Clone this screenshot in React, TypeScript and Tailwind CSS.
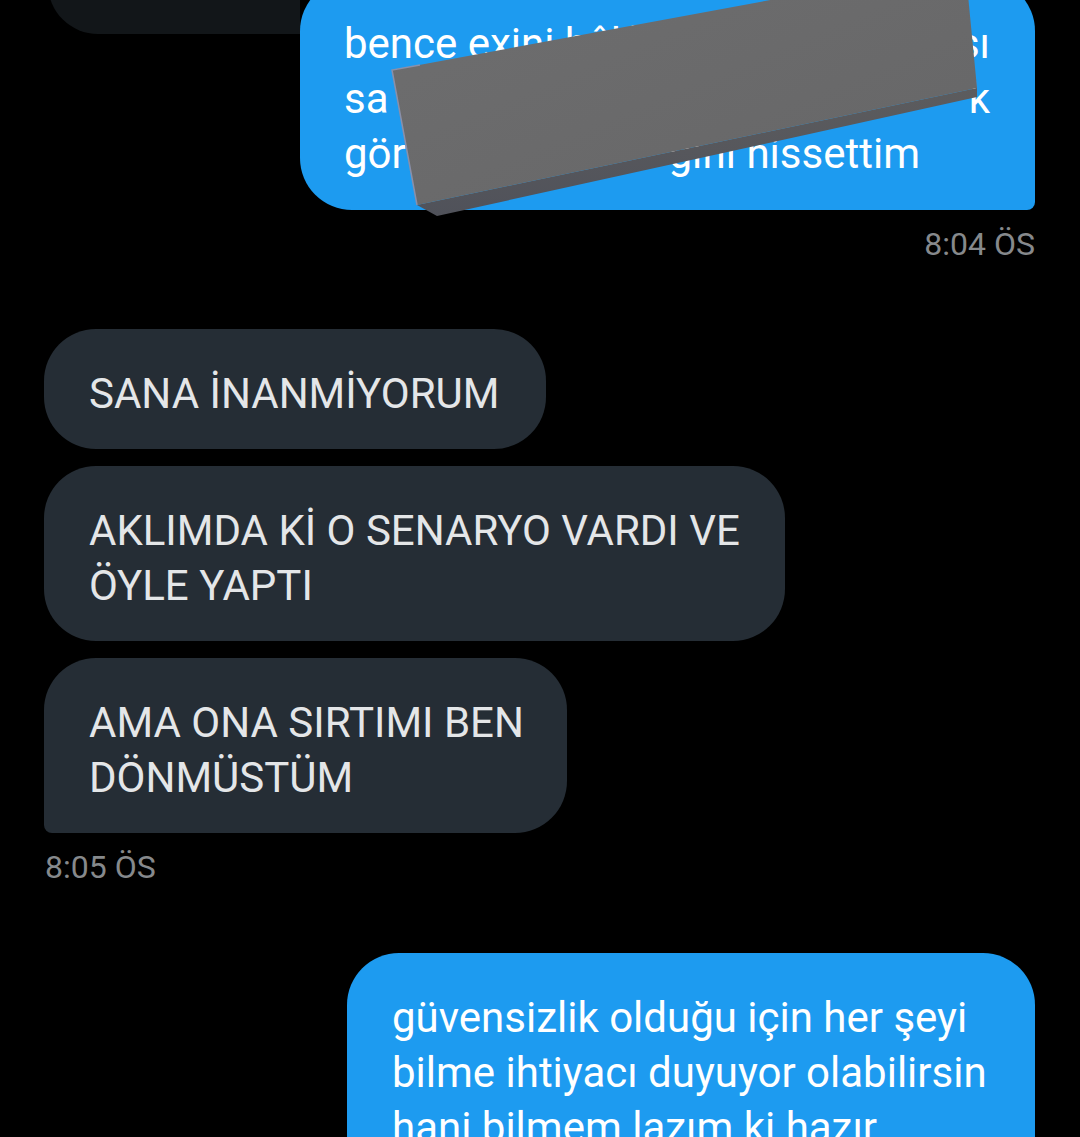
import React from "react";

const textFont = "font-['Roboto','Noto_Sans',sans-serif]";

/* gray bar that hides part of the first message */
const CoverBlock = () => (
  <svg
    className="absolute left-0 top-0 pointer-events-none"
    width="1080"
    height="240"
    viewBox="0 0 1080 240"
  >
    <defs>
      <linearGradient id="face" x1="0" y1="0" x2="1" y2="1">
        <stop offset="0" stopColor="#6e6e6f" />
        <stop offset="1" stopColor="#666667" />
      </linearGradient>
      <linearGradient id="lip" x1="0" y1="0" x2="0" y2="1">
        <stop offset="0" stopColor="#5c5c5e" />
        <stop offset="1" stopColor="#50525a" />
      </linearGradient>
    </defs>
    {/* bottom side */}
    <polygon points="417,205 977,88 977,97 437,216" fill="url(#lip)" />
    {/* front face */}
    <polygon points="392,70 965,-36 977,88 417,205" fill="url(#face)" />
    {/* left edge highlight */}
    <polyline points="417,205 392,70 420,65" fill="none" stroke="#8a90aa" strokeWidth="1.5" />
  </svg>
);

const Received = ({ w, last, lines }: { w: string; last?: boolean; lines: string[] }) => (
  <div
    className={`${w} bg-[#252d35] text-[#e4e6e8] text-[42px] leading-[55px] pl-[45px] pt-[37px] pb-[28px] whitespace-nowrap rounded-[52px] ${
      last ? "rounded-bl-[8px]" : ""
    }`}
  >
    {lines.map((l) => (
      <div key={l}>{l}</div>
    ))}
  </div>
);

export default function App() {
  return (
    <div className={`relative w-[1080px] h-[1137px] overflow-hidden bg-black ${textFont}`}>
      <div className="flex flex-col">
        {/* first visible row */}
        <div className="flex items-start -mt-[21px]">
          <div className="ml-[48px] w-[252px] h-[55px] bg-[#121619] rounded-bl-[50px]" />
          <div className="w-[735px] bg-[#1d9bf0] text-white text-[42px] leading-[55px] pl-[44px] pr-[45px] pt-[37px] pb-[29px] whitespace-nowrap rounded-[52px] rounded-br-[8px]">
            <div className="flex justify-between">
              <span>bence exini hâlâ</span>
              <span>sı</span>
            </div>
            <div className="flex justify-between">
              <span>sa</span>
              <span>k</span>
            </div>
            <div className="flex">
              <span>gör</span>
              <span className="ml-auto mr-[70px]">ğını hissettim</span>
            </div>
          </div>
        </div>
        <div className="self-end mr-[45px] mt-[15px] text-[32px] leading-[38px] text-[#86898c]">8:04 ÖS</div>

        {/* received group */}
        <div className="flex flex-col gap-[17px] items-start pl-[44px] mt-[66px]">
          <Received w="w-[502px]" lines={["SANA İNANMİYORUM"]} />
          <Received w="w-[741px]" lines={["AKLIMDA Kİ O SENARYO VARDI VE", "ÖYLE YAPTI"]} />
          <Received w="w-[523px]" last lines={["AMA ONA SIRTIMI BEN", "DÖNMÜSTÜM"]} />
        </div>
        <div className="ml-[45px] mt-[15px] text-[32px] leading-[38px] text-[#86898c]">8:05 ÖS</div>

        {/* sent */}
        <div className="self-end mr-[45px] mt-[67px] w-[688px] bg-[#1d9bf0] text-white text-[42px] leading-[55px] pl-[45px] pt-[37px] pb-[28px] whitespace-nowrap rounded-[52px] rounded-br-[8px]">
          <div>güvensizlik olduğu için her şeyi</div>
          <div>bilme ihtiyacı duyuyor olabilirsin</div>
          <div>hani bilmem lazım ki hazır</div>
          <div>olayım diye düşünüyorsun</div>
        </div>
      </div>
      <CoverBlock />
    </div>
  );
}
